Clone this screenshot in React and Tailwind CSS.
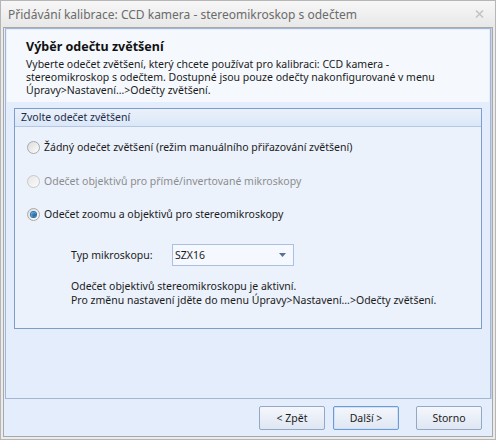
import React from "react";

function Radio({ checked, disabled }) {
  return (
    <span
      className={`relative inline-flex h-[13px] w-[13px] shrink-0 items-center justify-center rounded-full border ${
        disabled
          ? "border-[#c8c8c8] bg-gradient-to-br from-[#e6e6e6] to-[#fbfbfb]"
          : "border-[#a9a9a9] bg-gradient-to-br from-[#dcdcdc] to-[#fdfdfd]"
      }`}
    >
      {checked ? (
        <span className="h-[5px] w-[5px] rounded-full bg-gradient-to-br from-[#5db3ec] to-[#0d4f8c] ring-1 ring-[#2d6ea5]" />
      ) : null}
    </span>
  );
}

function Button({ children, primary }) {
  return (
    <div
      className={`flex h-[24px] w-[66px] items-center justify-center rounded-[2px] border bg-gradient-to-b from-[#f4f7fc] to-[#dfe7f3] text-[10.5px] text-[#1b1b1b] ${
        primary
          ? "border-[#6f9ad2] shadow-[inset_0_0_0_1px_#cfe1f8]"
          : "border-[#94a8c4]"
      }`}
    >
      {children}
    </div>
  );
}

export default function App() {
  return (
    <div className="flex h-[440px] w-[496px] flex-col border border-[#b6b6b6] bg-[#ebebeb] font-['Noto_Sans','Liberation_Sans',sans-serif] text-[10.5px] leading-[13px] text-[#1b1b1b]">
      {/* title bar */}
      <div className="flex h-[26px] shrink-0 items-center justify-between bg-gradient-to-b from-[#f7f7f7] to-[#e8e8e8] pl-[7px] pr-[11px] text-[12px] text-[#6b6b6b]">
        <span>Přidávání kalibrace: CCD kamera - stereomikroskop s odečtem</span>
        <svg width="9" height="8" viewBox="0 0 9 8">
          <path d="M1 0.5 L8 7.5 M8 0.5 L1 7.5" stroke="#c4c4c4" strokeWidth="1.6" />
        </svg>
      </div>

      {/* client area */}
      <div className="mx-[2px] mb-[2px] flex flex-1 flex-col border border-[#a8a8a8] bg-[#e3edfc]">
        <div className="mx-px flex h-[371px] flex-col border border-[#a4b6d0] p-px shadow-[1px_0_0_#c7d4e6]">
          {/* header */}
          <div className="h-[72px] shrink-0 bg-[#f5f9fe] pl-[19px] pt-[9px]">
            <div className="text-[12.5px] font-bold leading-[16px] text-[#111]">
              Výběr odečtu zvětšení
            </div>
            <div className="mt-[3px] w-[412px] leading-[13px]">
              Vyberte odečet zvětšení, který chcete používat pro kalibraci: CCD kamera -
              stereomikroskop s odečtem. Dostupné jsou pouze odečty nakonfigurované v menu
              Úpravy&gt;Nastavení…&gt;Odečty zvětšení.
            </div>
          </div>

          {/* group box */}
          <div className="ml-[7px] mt-[6px] flex h-[221px] w-[468px] flex-col border border-[#7f9dcb] bg-[#ebf2fc]">
            <div className="flex h-[18px] shrink-0 items-center border-b border-[#b4c7e4] bg-gradient-to-b from-[#eaf1fb] to-[#dbe7f8] pl-[6px] text-[#1c2c48]">
              Zvolte odečet zvětšení
            </div>

            <div className="mt-[12px] flex h-[16px] items-center gap-[4px] pl-[12px]">
              <Radio />
              <span>Žádný odečet zvětšení (režim manuálního přiřazování zvětšení)</span>
            </div>
            <div className="mt-[18px] flex h-[16px] items-center gap-[4px] pl-[12px] text-[#8d8d8d]">
              <Radio disabled />
              <span>Odečet objektivů pro přímé/invertované mikroskopy</span>
            </div>
            <div className="mt-[17px] flex h-[16px] items-center gap-[4px] pl-[12px]">
              <Radio checked />
              <span>Odečet zoomu a objektivů pro stereomikroskopy</span>
            </div>

            <div className="mt-[22px] flex items-center pl-[56px]">
              <span className="w-[101px]">Typ mikroskopu:</span>
              <div className="flex h-[22px] w-[122px] items-center justify-between border border-[#a9c0e0] bg-[#f5f9ff] pl-[2px] pr-[7px]">
                <span>SZX16</span>
                <svg width="7" height="4" viewBox="0 0 7 4">
                  <path d="M0 0 H7 L3.5 4 Z" fill="#5a6f92" />
                </svg>
              </div>
            </div>

            <div className="mt-[13px] pl-[56px] leading-[14px]">
              <div>Odečet objektivů stereomikroskopu je aktivní.</div>
              <div>Pro změnu nastavení jděte do menu Úpravy&gt;Nastavení…&gt;Odečty zvětšení.</div>
            </div>
          </div>
        </div>

        {/* buttons */}
        <div className="mt-[7px] flex justify-end pr-[10px]">
          <Button>&lt; Zpět</Button>
          <div className="ml-[8px]">
            <Button primary>Další &gt;</Button>
          </div>
          <div className="ml-[17px]">
            <Button>Storno</Button>
          </div>
        </div>
      </div>
    </div>
  );
}
